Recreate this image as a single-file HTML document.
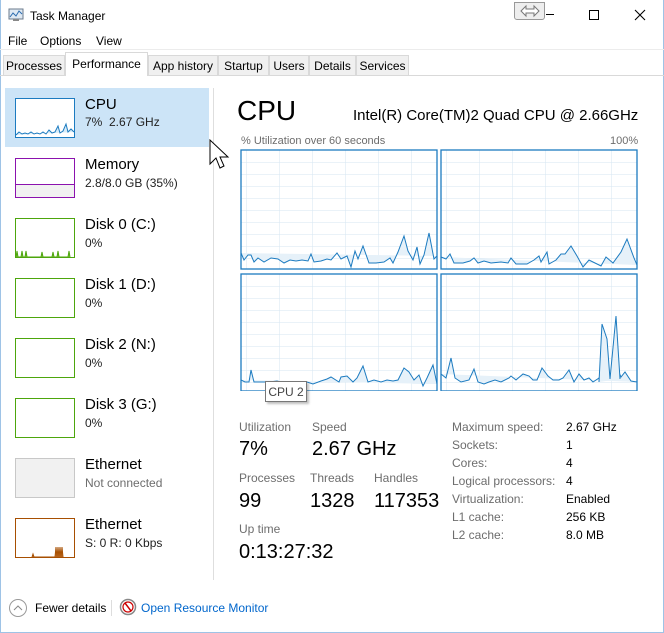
<!DOCTYPE html>
<html><head><meta charset="utf-8"><style>
*{margin:0;padding:0;box-sizing:border-box}
body{width:664px;height:633px;overflow:hidden;background:#fff;font-family:"Liberation Sans",sans-serif;color:#000;position:relative}
.a{position:absolute;white-space:nowrap}
.win{position:absolute;left:0;top:0;width:664px;height:633px;border:1px solid #9ec3e6;border-top:none}
.tab{position:absolute;top:55px;height:21px;background:#f0f0f0;border:1px solid #d9d9d9;font-size:12px;padding:3px 0 0;text-align:center}
.th{position:absolute;left:15px;width:60px;height:40px;background:#fff}
.t1{position:absolute;left:85px;font-size:15px}
.t2{position:absolute;left:85px;font-size:12px;color:#222}
.lab{font-size:12px;color:#6d6d6d;position:absolute}
.big{font-size:20px;position:absolute}
.k{font-size:12px;color:#6d6d6d;position:absolute;left:452px}
.v{font-size:12px;position:absolute;left:566px}
</style></head><body>
<div class="win"></div>
<svg class="a" style="left:8px;top:8px" width="16" height="14"><rect x="1" y="1" width="14" height="10" fill="#dfe9f3" stroke="#6b7b8c"/><polyline points="2,9 5,5 8,8 11,3 14,6" fill="none" stroke="#2b6cb0"/><rect x="5" y="11" width="6" height="2" fill="#888"/></svg>
<div class="a" style="left:30px;top:9px;font-size:12px">Task Manager</div>
<div class="a" style="left:514px;top:2px;width:31px;height:18px;border:1px solid #999;border-radius:0 0 3px 3px;background:#eee;text-align:center"><svg width="22" height="14" style="margin-top:1px"><path d="M2 7L7 2V5H15V2L20 7L15 12V9H7V12Z" fill="#fff" stroke="#777"/></svg></div>
<div class="a" style="left:546px;top:14px;width:8px;height:1px;background:#000"></div>
<div class="a" style="left:589px;top:10px;width:10px;height:10px;border:1px solid #000"></div>
<svg class="a" style="left:634px;top:9px" width="12" height="12"><path d="M1 1L11 11M11 1L1 11" stroke="#000" stroke-width="1.1"/></svg>
<div class="a" style="left:8px;top:34px;font-size:12px">File</div>
<div class="a" style="left:40px;top:34px;font-size:12px">Options</div>
<div class="a" style="left:96px;top:34px;font-size:12px">View</div>
<div class="a" style="left:0;top:49px;width:664px;height:1px;background:#ececec"></div>
<div class="a" style="left:0;top:75px;width:664px;height:1px;background:#d9d9d9"></div>
<div class="tab" style="left:3px;width:62px">Processes</div>
<div class="tab" style="left:65px;width:83px;top:52px;height:24px;background:#fff;border-bottom:none;padding-top:4px">Performance</div>
<div class="tab" style="left:148px;width:70px">App history</div>
<div class="tab" style="left:218px;width:51px">Startup</div>
<div class="tab" style="left:269px;width:40px">Users</div>
<div class="tab" style="left:309px;width:47px">Details</div>
<div class="tab" style="left:356px;width:53px">Services</div>

<div class="a" style="left:5px;top:88px;width:204px;height:59px;background:#cce4f7"></div>
<div class="a" style="left:213px;top:88px;width:1px;height:492px;background:#dedede"></div>

<div class="th" style="top:98px;border:1px solid #1c7bc0"><svg width="58" height="38"><polyline points="0,36 3,33 6,35 9,34 12,35 15,33 18,35 21,34 24,35 27,33 30,35 33,31 36,34 39,33 42,27 44,34 47,32 50,25 52,33 55,30 58,33" fill="#d9ecf8" stroke="#1c7bc0"/></svg></div>
<div class="t1" style="top:96px">CPU</div><div class="t2" style="top:115px">7%&nbsp; 2.67 GHz</div>
<div class="th" style="top:158px;border:1px solid #8b12ae"><div style="position:absolute;left:0;right:0;bottom:0;height:13px;background:#f1f1f1;border-top:1px solid #8b12ae"></div></div>
<div class="t1" style="top:156px">Memory</div><div class="t2" style="top:176px">2.8/8.0 GB (35%)</div>
<div class="th" style="top:218px;border:1px solid #4da60c"><svg width="58" height="38"><polyline points="0,38 1,32 2,38 5,38 6,32 7,38 9,38 10,32 11,38 25,38 26,33 27,38 36,38 37,33 38,38 41,38 42,32 43,38 52,38 53,32 54,38" fill="#8bc34a" stroke="#4da60c"/></svg></div>
<div class="t1" style="top:216px">Disk 0 (C:)</div><div class="t2" style="top:236px">0%</div>
<div class="th" style="top:278px;border:1px solid #4da60c"></div>
<div class="t1" style="top:276px">Disk 1 (D:)</div><div class="t2" style="top:296px">0%</div>
<div class="th" style="top:338px;border:1px solid #4da60c"></div>
<div class="t1" style="top:336px">Disk 2 (N:)</div><div class="t2" style="top:356px">0%</div>
<div class="th" style="top:398px;border:1px solid #4da60c"></div>
<div class="t1" style="top:396px">Disk 3 (G:)</div><div class="t2" style="top:416px">0%</div>
<div class="th" style="top:458px;border:1px solid #c8c8c8;background:#f1f1f1"></div>
<div class="t1" style="top:456px">Ethernet</div><div class="t2" style="top:476px;color:#6d6d6d">Not connected</div>
<div class="th" style="top:518px;border:1px solid #a74f01"><svg width="58" height="38"><polyline points="16,38 17,35 18,38 39,38 40,28 41,38 42,28 43,38 44,28 45,38 46,28 47,38" fill="#c77a3a" stroke="#a74f01"/></svg></div>
<div class="t1" style="top:516px">Ethernet</div><div class="t2" style="top:536px">S: 0 R: 0 Kbps</div>

<svg class="a" style="left:208px;top:138px" width="22" height="34"><path d="M2 2L2 26L8 20L12 30L16 28L12 19L20 19Z" fill="#fff" stroke="#000"/></svg>

<div class="a" style="left:237px;top:95px;font-size:28px">CPU</div>
<div class="a" style="left:353px;top:107px;font-size:15px">Intel(R) Core(TM)2 Quad CPU @ 2.66GHz</div>
<div class="lab" style="left:241px;top:135px;font-size:11px">% Utilization over 60 seconds</div>
<div class="lab" style="left:610px;top:135px;font-size:11px">100%</div>

<svg class="a" style="left:240px;top:149px" width="400" height="242">
<defs><pattern id="g" width="33" height="12" patternUnits="userSpaceOnUse" x="5"><path d="M0 0V12M0 0H33" stroke="#d6e6f2" fill="none"/></pattern></defs>
<g transform="translate(1,1)"><rect width="196" height="119" fill="url(#g)"/><polyline points="0,103 3,110 7,105 10,105 13,112 17,108 23,112 30,108 37,109 43,113 49,110 55,111 61,110 67,111 70,104 73,112 80,111 86,109 90,110 96,103 100,109 106,106 110,117 114,101 117,109 122,96 128,113 135,113 143,112 149,108 152,113 157,102 163,86 167,101 172,110 176,97 179,114 183,105 188,83 193,109 196,106 L196,119 0,119Z" fill="#e6f1f9" stroke="#1c7bc0"/></g>
<g transform="translate(201,1)"><rect width="196" height="119" fill="url(#g)"/><polyline points="0,107 5,109 9,104 13,113 22,113 29,111 33,108 37,113 43,111 50,113 60,112 67,113 70,108 75,114 86,114 93,110 98,106 100,112 106,102 108,114 115,110 120,104 124,104 130,96 136,106 142,117 148,110 154,113 160,116 165,107 172,113 180,102 186,89 193,108 196,115 L196,119 0,119Z" fill="#e6f1f9" stroke="#1c7bc0"/></g>
<g transform="translate(1,125)"><rect width="196" height="117" fill="url(#g)"/><polyline points="0,106 4,108 8,108 10,96 13,108 22,108 28,108 36,107 48,110 56,110 62,109 66,108 72,110 80,107 86,105 90,103 98,108 100,103 106,102 112,108 116,104 122,92 127,108 133,106 140,108 146,106 152,107 157,106 163,94 168,98 173,106 178,101 182,112 186,104 192,91 196,110 L196,117 0,117Z" fill="#e6f1f9" stroke="#1c7bc0"/></g>
<g transform="translate(201,125)"><rect width="196" height="117" fill="url(#g)"/><polyline points="0,100 5,104 10,84 14,104 20,108 28,106 33,95 37,108 43,110 48,108 54,106 60,108 68,104 70,102 75,106 82,100 88,102 92,106 96,106 101,94 107,102 112,106 118,106 122,104 128,96 133,108 138,100 143,106 148,104 152,108 158,104 163,95 167,100 172,103 176,94 180,103 184,98 190,107 196,108 L196,117 0,117Z" fill="#e6f1f9" stroke="#1c7bc0"/></g>
<g fill="none" stroke="#1c7bc0" stroke-width="1.3">
<rect x="1" y="1" width="196" height="119"/><rect x="201" y="1" width="196" height="119"/>
<rect x="1" y="125" width="196" height="117"/><rect x="201" y="125" width="196" height="117"/></g>
<polyline points="416,233 419,175 424,190 427,230 433,167 437,230" fill="#e6f1f9" stroke="#1c7bc0" transform="translate(-57,0)"/>
</svg>
<div class="a" style="left:265px;top:381px;width:42px;height:21px;border:1px solid #777;background:#fff;font-size:12px;color:#444;text-align:center;padding-top:3px;box-shadow:2px 2px 2px rgba(0,0,0,.25)">CPU 2</div>

<div class="lab" style="left:239px;top:420px">Utilization</div>
<div class="lab" style="left:312px;top:420px">Speed</div>
<div class="big" style="left:239px;top:438px">7%</div>
<div class="big" style="left:312px;top:438px">2.67 GHz</div>
<div class="lab" style="left:239px;top:471px">Processes</div>
<div class="lab" style="left:310px;top:471px">Threads</div>
<div class="lab" style="left:374px;top:471px">Handles</div>
<div class="big" style="left:239px;top:490px">99</div>
<div class="big" style="left:310px;top:490px">1328</div>
<div class="big" style="left:374px;top:490px">117353</div>
<div class="lab" style="left:239px;top:522px">Up time</div>
<div class="big" style="left:239px;top:541px">0:13:27:32</div>

<div class="k" style="top:420px">Maximum speed:</div><div class="v" style="top:420px">2.67 GHz</div>
<div class="k" style="top:438px">Sockets:</div><div class="v" style="top:438px">1</div>
<div class="k" style="top:456px">Cores:</div><div class="v" style="top:456px">4</div>
<div class="k" style="top:474px">Logical processors:</div><div class="v" style="top:474px">4</div>
<div class="k" style="top:492px">Virtualization:</div><div class="v" style="top:492px">Enabled</div>
<div class="k" style="top:510px">L1 cache:</div><div class="v" style="top:510px">256 KB</div>
<div class="k" style="top:528px">L2 cache:</div><div class="v" style="top:528px">8.0 MB</div>

<svg class="a" style="left:8px;top:598px" width="20" height="20"><circle cx="10" cy="10" r="8.5" fill="#fff" stroke="#999"/><path d="M6 12L10 8L14 12" fill="none" stroke="#888"/></svg>
<div class="a" style="left:35px;top:601px;font-size:12px">Fewer details</div>
<div class="a" style="left:111px;top:600px;width:1px;height:16px;background:#ddd"></div>
<svg class="a" style="left:119px;top:598px" width="18" height="18"><circle cx="9" cy="9" r="7.5" fill="#fff" stroke="#888" stroke-width="1.5"/><circle cx="9" cy="9" r="5" fill="none" stroke="#c00" stroke-width="1.2"/><path d="M6 5L12 13" stroke="#c00" stroke-width="1.5"/></svg>
<div class="a" style="left:141px;top:601px;font-size:12px;color:#0066cc">Open Resource Monitor</div>
</body></html>
